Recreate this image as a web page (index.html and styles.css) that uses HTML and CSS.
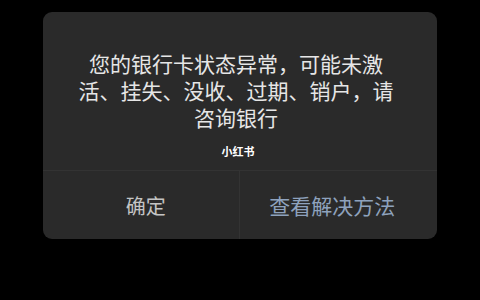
FILE: index.html
```html
<!DOCTYPE html>
<html lang="zh-CN">
<head>
    <meta charset="UTF-8">
    <meta name="viewport" content="width=device-width, initial-scale=1.0">
    <title>银行卡状态异常</title>
    <link rel="stylesheet" href="styles.css">
</head>
<body>
    <main class="screen">
        <section class="dialog">
            <p class="dialog-message">您的银行卡状态异常，可能未激活、挂失、没收、过期、销户，请咨询银行</p>
            <div class="watermark">小红书</div>
            <div class="dialog-actions">
                <button type="button" class="action">确定</button>
                <button type="button" class="action action-primary">查看解决方法</button>
            </div>
        </section>
    </main>
</body>
</html>
```

FILE: styles.css
```css
/* Estilos globais */
body {
    margin: 0;
    padding: 0;
    background-color: #000;
    color: #e8e8e8;
    font-family: "Noto Sans CJK SC", "Noto Sans", sans-serif;
}

.screen {
    width: 480px;
    height: 300px;
    padding-top: 12px;
    box-sizing: border-box;
}

/* Caixa de diálogo */
.dialog {
    width: 394px;
    margin: 0 0 0 43px;
    background-color: #2a2a2a;
    border-radius: 9px;
    overflow: hidden;
}

.dialog-message {
    margin: 0;
    padding: 38px 38px 0 30px;
    text-align: center;
    font-size: 21px;
    line-height: 27px;
    color: #e6e6e6;
}

.watermark {
    margin-top: 12px;
    padding-right: 4px;
    height: 16px;
    text-align: center;
    font-size: 11px;
    font-weight: 700;
    line-height: 16px;
    color: #fff;
}

/* Botões */
.dialog-actions {
    display: flex;
    margin-top: 11px;
    height: 68px;
    border-top: 1px solid #333;
}

.action {
    flex: 1;
    padding: 0;
    background: none;
    border: none;
    font-family: inherit;
    font-size: 20px;
    color: #c4c4c4;
}

.action:first-child {
    padding-left: 10px;
}

.action-primary {
    border-left: 1px solid #333;
    font-size: 21px;
    color: #8ea2bd;
    padding-right: 12px;
}
```
